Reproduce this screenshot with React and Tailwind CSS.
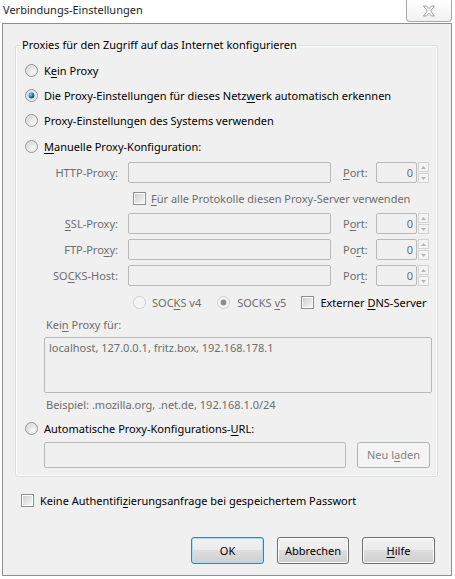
import React from "react";

// Access-key letter, drawn underlined like a Windows dialog
function K({ children }) {
  return <span className="underline underline-offset-[2px]">{children}</span>;
}

function Radio({ checked = false, disabled = false }) {
  return (
    <svg width="13" height="13" viewBox="0 0 13 13" className="shrink-0">
      <defs>
        <radialGradient id="radioFace" cx="0.7" cy="0.7" r="0.8">
          <stop offset="0" stopColor="#ffffff" />
          <stop offset="1" stopColor="#cfcfcf" />
        </radialGradient>
        <radialGradient id="radioDot" cx="0.35" cy="0.35" r="0.7">
          <stop offset="0" stopColor="#8ad1f5" />
          <stop offset="0.6" stopColor="#1f6fb2" />
          <stop offset="1" stopColor="#0b3f70" />
        </radialGradient>
      </defs>
      <circle
        cx="6.5"
        cy="6.5"
        r="6"
        fill={disabled ? "#f4f4f4" : "url(#radioFace)"}
        stroke={disabled ? "#cdcdcd" : "#959595"}
      />
      <circle cx="6.5" cy="6.5" r="4.6" fill="none" stroke={disabled ? "#f8f8f8" : "#e9e9e9"} strokeWidth="1" />
      {checked && <circle cx="6.5" cy="6.5" r="2.9" fill={disabled ? "#8f8f8f" : "url(#radioDot)"} />}
    </svg>
  );
}

function Check() {
  return (
    <div className="w-[13px] h-[13px] shrink-0 border border-[#8e8f8f] bg-white p-px">
      <div className="w-full h-full bg-[linear-gradient(135deg,#cbcfd5,#f7f7f7)]" />
    </div>
  );
}

function Field({ className = "" }) {
  return <div className={"h-[21px] rounded-[2px] border border-[#b9b9b9] bg-[#f0f0f0] " + className} />;
}

function Spinner() {
  return (
    <div className="ml-px flex h-[21px] w-[11px] flex-col gap-px">
      <div className="flex flex-1 items-center justify-center border border-[#d2d2d2] bg-[#f4f4f4]">
        <svg width="5" height="3" viewBox="0 0 5 3">
          <path d="M2.5 0 L5 3 L0 3 Z" fill="#b4b4b4" />
        </svg>
      </div>
      <div className="flex flex-1 items-center justify-center border border-[#d2d2d2] bg-[#f4f4f4]">
        <svg width="5" height="3" viewBox="0 0 5 3">
          <path d="M0 0 L5 0 L2.5 3 Z" fill="#b4b4b4" />
        </svg>
      </div>
    </div>
  );
}

function ProxyRow({ label, port }) {
  return (
    <div className="flex h-[21px] items-center">
      <div className="w-[93px] text-right text-[#6d6d6d]">{label}</div>
      <Field className="ml-[10px] w-[203px]" />
      <div className="ml-[12px] w-[33px] text-[#6d6d6d]">{port}</div>
      <div className="flex h-[21px] w-[41px] items-center justify-end rounded-[2px] border border-[#b9b9b9] bg-[#f0f0f0] pr-[3px] text-[#6d6d6d]">
        0
      </div>
      <Spinner />
    </div>
  );
}

function Button({ children, primary = false, disabled = false, className = "" }) {
  let look =
    "border-[#707070] bg-[linear-gradient(#f2f2f2,#ebebeb_50%,#dddddd_50%,#cfcfcf)] shadow-[inset_0_0_0_1px_#fbfbfb] text-black";
  if (primary)
    look =
      "border-[#3c7fb1] bg-[linear-gradient(#f2f2f2,#ebebeb_50%,#dddddd_50%,#cfcfcf)] shadow-[inset_0_0_0_1px_#a9dcf6] text-black";
  if (disabled) look = "border-[#adb2b5] bg-[#f4f4f4] text-[#838383]";
  return (
    <div className={"flex items-center justify-center rounded-[3px] border " + look + " " + className}>
      {children}
    </div>
  );
}

export default function App() {
  return (
    <div className="flex h-[579px] w-[455px] flex-col whitespace-nowrap bg-white font-[family-name:'Noto_Sans',sans-serif] text-[11px] leading-[16px] text-black">
      {/* title bar */}
      <div className="flex h-[23px] shrink-0 items-start justify-between">
        <div className="pl-[3px] pt-[2px] text-[#1e1e1e]">Verbindungs-Einstellungen</div>
        <div className="mr-[3px] flex h-[22px] w-[46px] items-center justify-center rounded-b-[4px] border border-t-0 border-[#a8a8a8] bg-[linear-gradient(#ffffff,#f1f1f1)]">
          <svg width="14" height="12" viewBox="0 0 14 12">
            <path
              d="M1.5 1 L4.5 1 L7 3.8 L9.5 1 L12.5 1 L8.6 6 L12.5 11 L9.5 11 L7 8.2 L4.5 11 L1.5 11 L5.4 6 Z"
              fill="#ffffff"
              stroke="#9a9a9a"
              strokeWidth="1"
              strokeLinejoin="round"
            />
          </svg>
        </div>
      </div>

      {/* client area */}
      <div className="mb-[3px] ml-[2px] mr-[3px] flex flex-1 flex-col border border-[#8e8f8f] bg-[#f0f0f0] pl-[12px] pr-[14px] pt-[13px]">
        <fieldset className="rounded-[3px] border border-[#d5dfe5] px-[5px] pb-[8px] shadow-[inset_0_0_0_1px_#ffffff]">
          <legend className="px-px">Proxies für den Zugriff auf das Internet konfigurieren</legend>

          <div className="flex flex-col pl-[4px]">
            <div className="mt-[5px] flex h-[25px] items-center gap-[6px]">
              <Radio />
              <span>
                K<K>e</K>in Proxy
              </span>
            </div>
            <div className="flex h-[25px] items-center gap-[6px]">
              <Radio checked />
              <span>
                Die Proxy-Einstellungen für dieses Netz<K>w</K>erk automatisch erkennen
              </span>
            </div>
            <div className="flex h-[25px] items-center gap-[6px]">
              <Radio />
              <span>
                Proxy-Einstellun<K>g</K>en des Systems verwenden
              </span>
            </div>
            <div className="mt-px flex h-[25px] items-center gap-[6px]">
              <Radio />
              <span>
                <K>M</K>anuelle Proxy-Konfiguration:
              </span>
            </div>

            <div className="mt-[3px]">
              <ProxyRow
                label={<>HTTP-Prox<K>y</K>:</>}
                port={<><K>P</K>ort:</>}
              />
            </div>
            <div className="mt-[5px] flex h-[21px] items-center pl-[108px]">
              <Check />
              <span className="ml-[5px] text-[#6d6d6d]">
                <K>F</K>ür alle Protokolle diesen Proxy-Server verwenden
              </span>
            </div>
            <div className="mt-[4px]">
              <ProxyRow
                label={<><K>S</K>SL-Proxy:</>}
                port={<>P<K>o</K>rt:</>}
              />
            </div>
            <div className="mt-[5px]">
              <ProxyRow
                label={<>FTP-Pro<K>x</K>y:</>}
                port={<>Po<K>r</K>t:</>}
              />
            </div>
            <div className="mt-[5px]">
              <ProxyRow
                label={<>SO<K>C</K>KS-Host:</>}
                port={<>Por<K>t</K>:</>}
              />
            </div>

            <div className="mt-[6px] flex h-[21px] items-center pl-[108px]">
              <Radio disabled />
              <span className="ml-[6px] text-[#6d6d6d]">
                SOC<K>K</K>S v4
              </span>
              <span className="ml-[16px]">
                <Radio checked disabled />
              </span>
              <span className="ml-[7px] text-[#6d6d6d]">
                SOCKS <K>v</K>5
              </span>
              <span className="ml-[15px]">
                <Check />
              </span>
              <span className="ml-[6px]">
                Externer <K>D</K>NS-Server
              </span>
            </div>

            <div className="ml-[21px] mt-[4px] h-[16px] text-[#6d6d6d]">
              Kei<K>n</K> Proxy für:
            </div>
            <div className="ml-[19px] mt-[4px] h-[56px] w-[388px] rounded-[2px] border border-[#b9b9b9] bg-[#f0f0f0] px-[4px] py-[2px] text-[#6d6d6d]">
              localhost, 127.0.0.1, fritz.box, 192.168.178.1
            </div>
            <div className="ml-[21px] mt-[4px] h-[16px] text-[#6d6d6d]">
              Beispiel: .mozilla.org, .net.de, 192.168.1.0/24
            </div>

            <div className="mt-[5px] flex h-[21px] items-center gap-[6px]">
              <Radio />
              <span>
                Automatische Proxy-Konfigurations-<K>U</K>RL:
              </span>
            </div>
            <div className="ml-[19px] mt-[3px] flex h-[26px] items-stretch gap-[11px]">
              <div className="w-[302px] rounded-[2px] border border-[#b9b9b9] bg-[#f0f0f0]" />
              <Button disabled className="w-[73px]">
                Neu l<K>a</K>den
              </Button>
            </div>
          </div>
        </fieldset>

        <div className="ml-[6px] mt-[13px] flex h-[21px] items-center">
          <Check />
          <span className="ml-[6px]">
            Keine Authentifi<K>z</K>ierungsanfrage bei gespeichertem Passwort
          </span>
        </div>

        <div className="mt-[26px] flex h-[27px] justify-end gap-[13px] pr-[2px]">
          <Button primary className="w-[73px]">
            OK
          </Button>
          <Button className="w-[72px]">Abbrechen</Button>
          <Button className="w-[73px]">
            <K>H</K>ilfe
          </Button>
        </div>
      </div>
    </div>
  );
}
